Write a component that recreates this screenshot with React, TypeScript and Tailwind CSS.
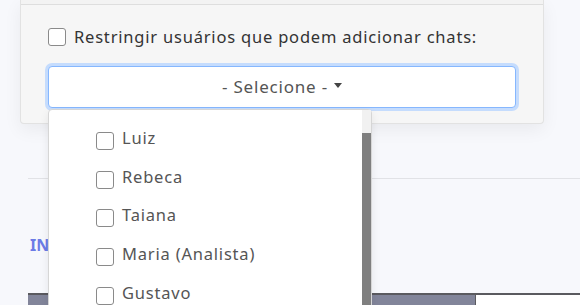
import { useState } from "react";

const USERS = ["Luiz", "Rebeca", "Taiana", "Maria (Analista)", "Gustavo", "Pedro"];

const Box = ({ className = "" }: { className?: string }) => (
    <span
        className={`inline-block shrink-0 w-[18px] h-[18px] rounded-[3px] border-[1.5px] border-[#8a8a8a] bg-white ${className}`}
    />
);

const App = () => {
    const [restrict] = useState(false);

    return (
        <div
            className="relative w-[580px] h-[305px] overflow-hidden bg-[#f7f8fc]"
            style={{ fontFamily: '"Noto Sans", "Open Sans", sans-serif' }}
        >
            {/* card */}
            <div className="ml-[20px] w-[524px] bg-[#f6f6f6] border border-t-0 border-[#e2e2e2] rounded-b-[4px] shadow-[0_6px_18px_rgba(0,0,0,0.06)]">
                <div className="h-[5px] bg-[#f3f3f3] border-b border-[#dedede]" />
                <div className="px-[27px] pt-[22px] pb-[15px]">
                    <label className="flex items-center gap-[8px] text-[16.5px] tracking-[0.8px] text-[#333] leading-[20px]">
                        <Box className={restrict ? "bg-blue-500" : ""} />
                        <span>Restringir usuários que podem adicionar chats:</span>
                    </label>
                    <div className="mt-[19px] h-[42px] flex items-center justify-center gap-[6px] bg-white border border-[#86b7fe] rounded-[4px] ring-[3px] ring-[#c5dcfd] text-[17px] tracking-[0.8px] text-[#555]">
                        <span>- Selecione -</span>
                        <span className="w-0 h-0 border-x-[4.5px] border-x-transparent border-t-[5px] border-t-[#444] mt-[-3px]" />
                    </div>
                </div>
            </div>

            {/* page behind */}
            <div className="ml-[28px] mt-[54px] border-t border-[#e1e2e6]" />
            <div className="ml-[30px] mt-[56px] whitespace-nowrap text-[16px] font-bold text-[#6b7be6] leading-[20px]">
                INFORMAÇÕES
            </div>
            <div className="ml-[28px] mt-[38px] flex h-[20px] border-t-2 border-[#5a5a5f]">
                <div className="w-[447px] bg-[#82859a]" />
                <div className="flex-1 bg-white border-l border-[#5a5a5f]" />
            </div>

            {/* dropdown menu */}
            <div className="absolute left-[48px] top-[109px] w-[324px] h-[220px] flex bg-white border border-[#d6d6d6] rounded-[4px] shadow-[0_4px_10px_rgba(0,0,0,0.08)]">
                <ul className="flex-1 pt-[18px] pl-[47px]">
                    {USERS.map((name) => (
                        <li key={name} className="flex items-start gap-[8px] h-[38.7px] pt-[3px] text-[16.5px] tracking-[0.8px] text-[#555] leading-[18px]">
                            <Box className="mt-[1px]" />
                            <span className="-mt-[2px]">{name}</span>
                        </li>
                    ))}
                </ul>
                <div className="w-[9px] flex flex-col bg-[#f1f1f1]">
                    <div className="h-[23px]" />
                    <div className="flex-1 bg-[#7f7f7f]" />
                </div>
            </div>
        </div>
    );
};

export default App;
